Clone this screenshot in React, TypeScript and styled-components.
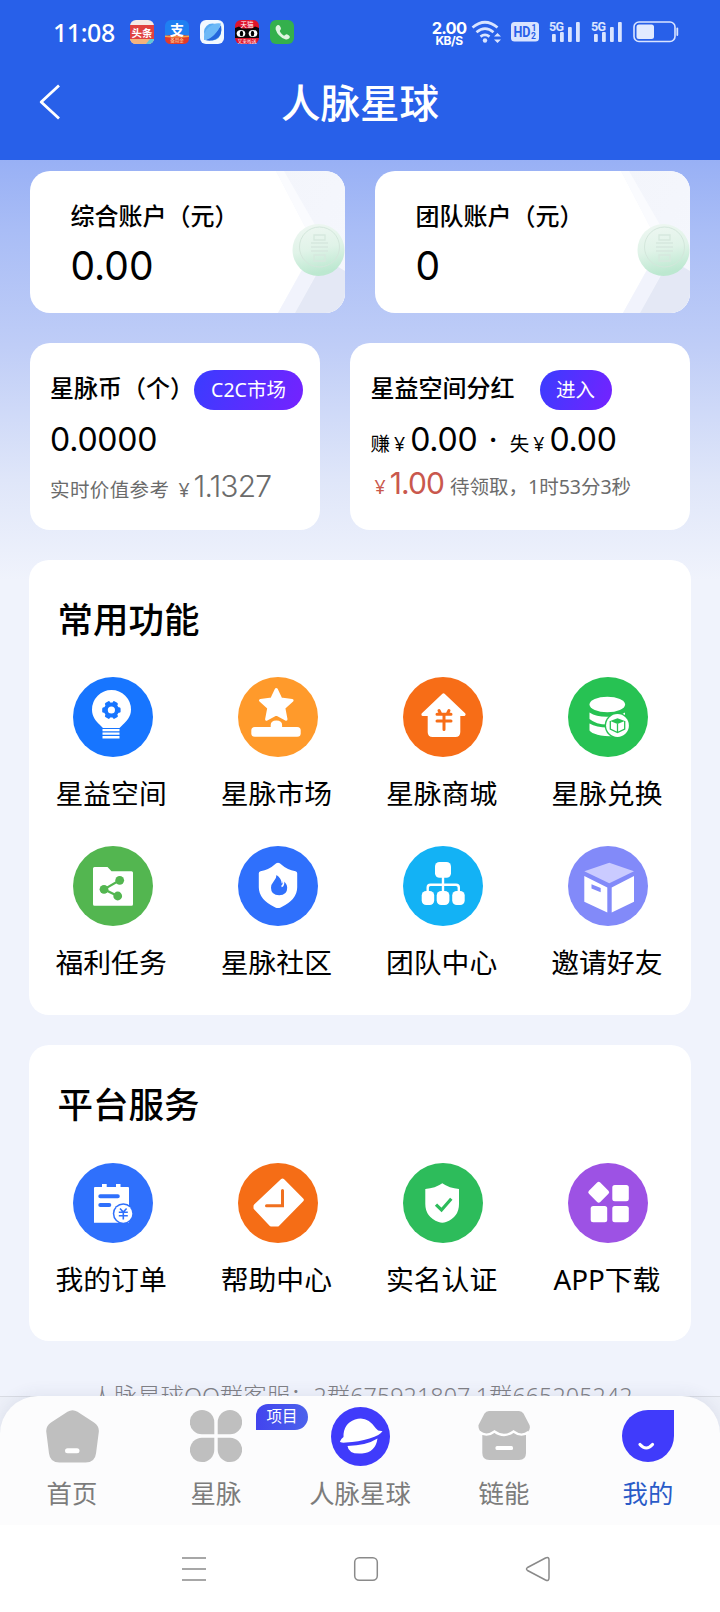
import React from 'react';
import styled, { createGlobalStyle } from 'styled-components';

const sans = `"Noto Sans", "Noto Sans CJK SC", sans-serif`;
const numeric = `Inter, "Noto Sans CJK SC", sans-serif`;

const GlobalStyle = createGlobalStyle`
  * { box-sizing: border-box; }
  body { margin: 0; background: #f0f3fc; font-family: ${sans}; color: #000; }
  svg { display: block; flex: none; }
  h1, h2, p { margin: 0; }
`;

const Page = styled.div`
  width: 720px;
  height: 1612px;
  display: flex;
  flex-direction: column;
  overflow: hidden;
`;

const Header = styled.header`
  height: 160px;
  flex: none;
  background: #2860e9;
  color: #fff;
`;

const StatusBar = styled.div`
  height: 64px;
  padding: 0 41px 0 53px;
  display: flex;
  align-items: center;
  justify-content: space-between;
`;

const StatusGroup = styled.div<{ $gap: number }>`
  display: flex;
  align-items: center;
  gap: ${(p) => p.$gap}px;
`;

const Clock = styled.span`
  font: 500 25px/30px ${sans};
  letter-spacing: -0.45px;
  width: 66px;
`;

const Speed = styled.div`
  width: 36px;
  text-align: center;
  font: 700 16.5px/14px ${numeric};
  letter-spacing: -0.8px;
  padding-top: 2px;
  small {
    display: block;
    font: 700 12px/11px ${numeric};
    letter-spacing: -0.5px;
  }
`;

const TitleBar = styled.div`
  height: 78px;
  display: grid;
  grid-template-columns: 100px 1fr 100px;
  align-items: center;
`;

const BackButton = styled.button`
  border: 0;
  padding: 0 0 2px 38px;
  background: none;
  color: inherit;
`;

const Title = styled.h1`
  text-align: center;
  font: 500 39.5px/54px ${sans};
`;

const Main = styled.main`
  flex: 1;
  min-height: 0;
  overflow: hidden;
  padding: 11px 29px 0;
  background: linear-gradient(#98b0f5 0, #a9bdf6 70px, #bfcdf7 185px, #dfe6f9 320px, #f0f3fc 420px);
`;

const CardRow = styled.div<{ $cols: string }>`
  display: grid;
  grid-template-columns: ${(p) => p.$cols};
  gap: 30px;
  margin: 0 1px 30px;
`;

const Card = styled.section<{ $height: number; $pad: string }>`
  position: relative;
  height: ${(p) => p.$height}px;
  padding: ${(p) => p.$pad};
  border-radius: 20px;
  overflow: hidden;
  background: #fff;
  white-space: nowrap;
`;

const CardArt = styled.svg`
  position: absolute;
  inset: 0;
`;

const CardBody = styled.div`
  position: relative;
`;

const CardHead = styled.div<{ $gap: number }>`
  display: flex;
  align-items: center;
  gap: ${(p) => p.$gap}px;
  height: 40px;
`;

const CardLabel = styled.div`
  font: 500 24px/30px ${sans};
  height: 34px;
`;

const Amount = styled.div`
  font: 400 39px/50px ${numeric};
  margin-top: 6px;
`;

const Chip = styled.button<{ $width: number }>`
  width: ${(p) => p.$width}px;
  height: 40px;
  flex: none;
  border: 0;
  padding: 0;
  border-radius: 20px;
  color: #fff;
  font: 400 19.5px/38px ${sans};
  background: linear-gradient(110deg, #3a3cff, #7522ff);
`;

const Line = styled.div<{ $top: number; $muted?: boolean }>`
  display: flex;
  align-items: baseline;
  height: 40px;
  line-height: 40px;
  margin-top: ${(p) => p.$top}px;
  font-size: 19.5px;
  font-family: ${sans};
  color: ${(p) => (p.$muted ? '#6b6b6b' : '#000')};
`;

const Num = styled.span<{ $size: number; $light?: boolean; $left?: number; $red?: boolean; $track?: number }>`
  font-family: ${numeric};
  font-size: ${(p) => p.$size}px;
  font-weight: ${(p) => (p.$light ? 300 : 400)};
  margin-left: ${(p) => p.$left ?? 0}px;
  letter-spacing: ${(p) => p.$track ?? 0}px;
  ${(p) => p.$red && 'color: #c9584d;'}
`;

const Bit = styled.span<{ $left?: number; $red?: boolean; $track?: number }>`
  margin-left: ${(p) => p.$left ?? 0}px;
  letter-spacing: ${(p) => p.$track ?? 0}px;
  ${(p) => p.$red && 'color: #c9584d;'}
`;

const Panel = styled.section<{ $height: number }>`
  height: ${(p) => p.$height}px;
  padding-top: 35px;
  margin-bottom: 30px;
  border-radius: 20px;
  background: #fff;
`;

const PanelTitle = styled.h2`
  padding-left: 28.5px;
  font: 500 35.5px/48px ${sans};
`;

const Grid = styled.div<{ $top: number }>`
  display: grid;
  grid-template-columns: repeat(4, 1fr);
  row-gap: 26px;
  padding: ${(p) => p.$top}px 0 0 1px;
`;

const Feature = styled.div`
  display: flex;
  flex-direction: column;
  align-items: center;
  height: 143px;
`;

const FeatureLabel = styled.span`
  margin-top: 16px;
  font: 400 27.8px/40px ${sans};
  padding-right: 3px;
  white-space: nowrap;
`;

const Support = styled.p`
  padding: 9px 0 0 3px;
  text-align: center;
  font: 300 23.4px/32px ${sans};
  color: #808085;
  white-space: nowrap;
`;

const TabDock = styled.div`
  position: relative;
  flex: none;
  height: 129px;
  background: linear-gradient(#d9dce3 1px, #edf0f8 1px);
`;

const TabBar = styled.nav`
  height: 129px;
  display: grid;
  grid-template-columns: repeat(5, 1fr);
  border-radius: 38px 38px 0 0;
  background: #fcfcfd;
  box-shadow: 0 -2px 16px rgba(60, 70, 110, 0.09);
`;

const Tab = styled.div<{ $active?: boolean }>`
  position: relative;
  display: flex;
  flex-direction: column;
  align-items: center;
  color: ${(p) => (p.$active ? '#2a5bc8' : '#7c7c7c')};
  font: 400 25.4px/36px ${sans};
  white-space: nowrap;
`;

const TabIcon = styled.div`
  height: 79px;
  padding-top: 1px;
  display: flex;
  align-items: center;
  justify-content: center;
`;

const Badge = styled.span`
  position: absolute;
  left: 112px;
  top: 8px;
  width: 52px;
  height: 26px;
  border-radius: 12px 13px 13px 0;
  background: linear-gradient(90deg, #4244ee, #4c62ec);
  color: #fff;
  font: 400 15.5px/25px ${sans};
  text-align: center;
`;

const SystemNav = styled.div`
  position: relative;
  flex: none;
  height: 87px;
  display: flex;
  align-items: center;
  justify-content: center;
  gap: 146px;
  padding-left: 12px;
  background: #fff;
`;

type Art = { color: string; children: React.ReactNode };
const Disc = ({ color, children }: Art) => (
  <svg width="80" height="80" viewBox="0 0 80 80">
    <circle cx="40" cy="40" r="40" fill={color} />
    {children}
  </svg>
);

const common = [
  {
    label: '星益空间',
    color: '#1775ff',
    art: (
      <g fill="#fff">
        <path d="M19 32.5a19.5 19.5 0 0 1 39 0c0 7.500-4.500 11.500-8 15l-3.500 3.500h-16.500l-3.500-3.500c-3.500-3.500-7.500-7.500-7.500-15z" />
        <path d="M29.500 52h17v2.200h-17zM29.500 55.500h17v2.200h-17zM29.500 59h17v2.500h-17z" />
        <circle cx="38.400" cy="33" r="5.600" fill="none" stroke="#1775ff" strokeWidth="4" />
        <g fill="#1775ff">
          {[0, 60, 120, 180, 240, 300].map((a) => (
            <rect key={a} x="35.600" y="23.800" width="5.600" height="4.500" rx="1.500" transform={`rotate(${a + 30} 38.400 33)`} />
          ))}
        </g>
      </g>
    ),
  },
  {
    label: '星脉市场',
    color: '#ff9a2b',
    art: (
      <g fill="#fff" stroke="#fff" strokeLinejoin="round">
        <path strokeWidth="3" d="M38.300 12.500l4.600 9.600 11.200 1.300-8.300 7.500 2.200 11.400-9.700-5.400-9.700 5.400 2.200-11.400-8.300-7.500 11.200-1.300z" />
        <rect x="13.300" y="50" width="49.400" height="9.800" rx="3.500" stroke="none" />
        <path stroke="none" d="M32.700 51v-3q0-4.500 5.700-4.500t5.700 4.500v3z" />
      </g>
    ),
  },
  {
    label: '星脉商城',
    color: '#f76d17',
    art: (
      <>
        <path d="M40.500 18L61 37.400H20z" fill="#fff" stroke="#fff" strokeWidth="3.200" strokeLinejoin="round" />
        <path d="M24.700 36h32.600v19q0 5-5 5H29.700q-5 0-5-5z" fill="#fff" />
        <path d="M36 33.500l1.500 3M46 33.500l-1.500 3M34 37.300h14M34 44h14M41 38v14.500" fill="none" stroke="#f76d17" strokeWidth="3" strokeLinecap="round" />
      </>
    ),
  },
  {
    label: '星脉兑换',
    color: '#27c253',
    art: (
      <>
        <ellipse cx="39.300" cy="27.500" rx="17.800" ry="7.700" fill="#fff" />
        <path d="M21.500 35.500q7 4.500 18 4.300 11 0 17.500-4.300v9q-6 3-17.500 3T21.500 42zM21.500 46.500q7 4 18 4h8v8.700q-12 0-18-1.500t-8-4.200z" fill="#fff" />
        <circle cx="49.500" cy="48.500" r="12.800" fill="#27c253" />
        <circle cx="49.500" cy="48.500" r="11.400" fill="#fff" />
        <path d="M49.500 41.300l7.300 2.700-7.300 2.900-7.300-2.900z" fill="#27c253" />
        <path d="M42.300 44v8l7.200 3.500 7.200-3.500v-8M49.500 47v8" fill="none" stroke="#27c253" strokeWidth="1.300" />
      </>
    ),
  },
  {
    label: '福利任务',
    color: '#53b650',
    art: (
      <>
        <path d="M21.500 21h13l4 4.300H58.500q1.500 0 1.500 1.500v31.500q0 1.500-1.500 1.500h-37q-1.500 0-1.500-1.500v-35.800q0-1.500 1.500-1.500z" fill="#fff" />
        <path d="M46.700 34.300L31 43.300l13.700 6.700" fill="none" stroke="#53b650" strokeWidth="2.200" />
        <g fill="#53b650">
          <circle cx="46.700" cy="34.300" r="4.400" />
          <circle cx="31" cy="43.300" r="4.400" />
          <circle cx="44.700" cy="50" r="4.400" />
        </g>
      </>
    ),
  },
  {
    label: '星脉社区',
    color: '#2f70fc',
    art: (
      <>
        <path d="M40 16.700q2 0 3 1.500 6 5.500 14.500 7 1.700.300 1.700 2v14q0 12.500-16.500 20.200-2.700 1.300-5.400 0Q20.800 53.700 20.800 41.200v-14q0-1.700 1.700-2 8.500-1.500 14.500-7 1-1.500 3-1.500z" fill="#fff" />
        <path d="M38.500 29q5 3.500 5.200 8.500 1.300-.800 1.300-2.800 4.200 3 4.200 7 0 7.500-8 7.500-8.200 0-8.200-7.500 0-3.200 2.600-6.200 2.900-3 2.900-6.500z" fill="#2f70fc" />
        <path d="M43.500 40.500q2.500-1 2-6" fill="none" stroke="#fff" strokeWidth="1.600" />
      </>
    ),
  },
  {
    label: '团队中心',
    color: '#13b2f5',
    art: (
      <>
        <g fill="#fff">
          <rect x="32" y="16" width="16" height="15.700" rx="4.500" />
          <rect x="18.700" y="45" width="12.500" height="14" rx="4.500" />
          <rect x="33.700" y="45" width="12.700" height="14" rx="4.500" />
          <rect x="49.200" y="45" width="12.500" height="14" rx="4.500" />
        </g>
        <path d="M40 31v15M24.700 46v-4.500q0-2.800 2.800-2.800h25.500q2.800 0 2.800 2.800V46" fill="none" stroke="#fff" strokeWidth="2.400" />
      </>
    ),
  },
  {
    label: '邀请好友',
    color: '#828af9',
    art: (
      <>
        <path d="M41.300 16.700L66 25.300 41.300 37.300 16.300 25.300z" fill="#cacbff" />
        <path d="M16.300 30l23 11.500v25L16.300 55.700zM66 30L43.700 41.500v25L66 55.700z" fill="#fff" />
        <path d="M23.500 38.200l9.200 3.800v4.200l-9.200-3.700z" fill="#828af9" />
      </>
    ),
  },
];

const services = [
  {
    label: '我的订单',
    color: '#2f70fc',
    art: (
      <>
        <path d="M22 24h7v-3h4.700v3h9.300v-3h4.500v3H55q1 0 1 1v34.700H21V25q0-1 1-1z" fill="#fff" />
        <path d="M27.300 33.300h17.500M27.300 42h9" stroke="#2f70fc" strokeWidth="4" strokeLinecap="round" />
        <circle cx="50.300" cy="50.700" r="10.500" fill="#2f70fc" />
        <circle cx="50.300" cy="50.700" r="9" fill="#fff" />
        <path d="M47 45.500l3.300 3.500 3.300-3.500M45.800 49.300h9M45.800 52.700h9M50.300 49v7.500" fill="none" stroke="#2f70fc" strokeWidth="1.600" />
      </>
    ),
  },
  {
    label: '帮助中心',
    color: '#f56d16',
    art: (
      <>
        <path d="M44.500 17.500L63.800 36.800 39.500 61.500h-6.500L17.500 45v-2z" fill="#fff" stroke="#fff" strokeWidth="4" strokeLinejoin="round" />
        <path d="M44.500 27.500v15.300H28.500" fill="none" stroke="#f0701f" strokeWidth="3" strokeLinecap="round" />
      </>
    ),
  },
  {
    label: '实名认证',
    color: '#2dbc5b',
    art: (
      <>
        <path d="M39.300 20.300q7 5 16.700 5.700v15q0 13-13 18-3.700 1.500-7.400 0-13.300-5-13.300-18V26q10-.700 17-5.700z" fill="#fff" />
        <path d="M33 41.700l5.500 5.300 9.800-11.300" fill="none" stroke="#2dbc5b" strokeWidth="3.200" />
      </>
    ),
  },
  {
    label: 'APP下载',
    color: '#9d52e4',
    art: (
      <g fill="#fff">
        <rect x="22.700" y="21.300" width="16" height="16" rx="2.200" transform="rotate(45 30.700 29.300)" />
        <rect x="44.300" y="22" width="16.500" height="16.300" rx="2.500" />
        <rect x="22.700" y="43" width="16.500" height="16.300" rx="2.500" />
        <rect x="44.300" y="43" width="16.500" height="16.300" rx="2.500" />
      </g>
    ),
  },
];

const EnergyArt = ({ id }: { id: string }) => (
  <CardArt width="315" height="142" viewBox="0 0 315 142" aria-hidden>
    <defs>
      <linearGradient id={`${id}-coin`} x1="0" y1="0" x2="0.200" y2="1">
        <stop offset="0" stopColor="#f0f7f3" />
        <stop offset="0.550" stopColor="#e0f3e8" />
        <stop offset="1" stopColor="#bce8d0" />
      </linearGradient>
      <linearGradient id={`${id}-top`} x1="0" y1="0" x2="1" y2="1">
        <stop offset="0" stopColor="#f3f5fb" />
        <stop offset="1" stopColor="#f5f7fd" />
      </linearGradient>
    </defs>
    <path d="M246 0H315V142H248L285 75z" fill={`url(#${id}-top)`} />
    <path d="M246 0H254L292 66 285 75z" fill="#fafbfe" />
    <path d="M248 142H265L294 88 284 78z" fill="#f1f3fc" />
    <path d="M265 142L295 88 315 100V142z" fill="#e4e8f5" />
    <circle cx="288.500" cy="79" r="26" fill={`url(#${id}-coin)`} />
    <circle cx="289.500" cy="76" r="20" fill="none" stroke="#d3e6db" strokeWidth="1" />
    <path d="M284 64h11v5h-11zM281 72h17M281 76h17M281 80h17M284 84h11v6h-11z" fill="none" stroke="#d6e8de" strokeWidth="1.300" />
    <text x="15" y="82" fontFamily="DejaVu Sans" fontWeight="700" fontStyle="italic" fontSize="34" fill="#000" fillOpacity="0.018" textLength="240">
      Green energ
    </text>
  </CardArt>
);

const SoftArt = ({ width }: { width: number }) => (
  <CardArt width={width} height="187" viewBox={`0 0 ${width} 187`} aria-hidden>
    <text x="20" y="108" fontFamily="DejaVu Sans" fontWeight="700" fontStyle="italic" fontSize="45" fill="#000" fillOpacity="0.014" textLength="330">
      Green energ
    </text>
  </CardArt>
);

const Signal = () => (
  <svg width="32" height="24" viewBox="0 0 32 24" fill="#d9e4ff">
    <text x="0" y="10.500" fontFamily="Roboto" fontSize="12.500" fontWeight="700" textLength="15">5G</text>
    <rect x="3" y="14" width="3.800" height="8" rx="1" />
    <rect x="11" y="12" width="3.800" height="10" rx="1" />
    <rect x="19" y="7" width="3.800" height="15" rx="1" />
    <rect x="27" y="2" width="3.800" height="20" rx="1" />
  </svg>
);

const StatusIcons = () => (
  <>
    <svg width="24" height="24" viewBox="0 0 24 24">
      <rect width="24" height="24" rx="6" fill="#f5e9e6" />
      <path d="M0 5h24v14H0z" fill="#e0403f" />
      <path d="M0 19h24q-1 5-6 5H6q-5 0-6-5z" fill="#f3b27c" />
      <path d="M16 24l4-5h4q-1 5-6 5z" fill="#5cc6dc" />
      <text x="12" y="16.500" fontFamily="Noto Sans CJK SC" fontWeight="700" fontSize="10.500" fill="#fff" textAnchor="middle">头条</text>
    </svg>
    <svg width="24" height="24" viewBox="0 0 24 24">
      <rect width="24" height="24" rx="6" fill="#1f7ff2" />
      <path d="M0 16q12-3 24 0v2q0 6-6 6H6q-6 0-6-6z" fill="#e23a2a" />
      <path d="M0 15.500q12 1.500 24 0v1.500q-12 1-24 0z" fill="#f4a54a" />
      <text x="12" y="14.500" fontFamily="Noto Sans CJK SC" fontWeight="700" fontSize="14" fill="#fff" textAnchor="middle">支</text>
      <text x="12" y="22" fontFamily="Noto Sans CJK SC" fontSize="4.500" fill="#ffe2b0" textAnchor="middle">备用金</text>
    </svg>
    <svg width="24" height="24" viewBox="0 0 24 24">
      <rect width="24" height="24" rx="6" fill="#f1f8ff" />
      <circle cx="12.500" cy="12" r="8.500" fill="#56aaf3" />
      <path d="M21 5q2 10-5 14-5 3-11 1Q15 17 21 5z" fill="#2467dc" />
      <path d="M4 20Q3 12 9 7t12-3.500Q19 10 14 15T4 20z" fill="#6cb9f7" />
    </svg>
    <svg width="24" height="24" viewBox="0 0 24 24">
      <rect width="24" height="24" rx="6" fill="#e0142c" />
      <path d="M0 8l4-1.500 3 2h10l3-2L24 8v10H0z" fill="#0c0709" />
      <ellipse cx="6" cy="13.500" rx="4.300" ry="3.500" fill="#fff" />
      <ellipse cx="18" cy="13.500" rx="4.300" ry="3.500" fill="#fff" />
      <ellipse cx="6.500" cy="13.500" rx="1.700" ry="2.800" />
      <ellipse cx="17.500" cy="13.500" rx="1.700" ry="2.800" />
      <text x="12" y="7" fontFamily="Noto Sans CJK SC" fontSize="6.500" fill="#fff" textAnchor="middle">天猫</text>
      <text x="12" y="22.700" fontFamily="Noto Sans CJK SC" fontSize="4.800" fill="#fff" textAnchor="middle">又来啦送</text>
    </svg>
    <svg width="24" height="24" viewBox="0 0 24 24">
      <rect width="24" height="24" rx="6" fill="#34b04c" />
      <path d="M7.200 5.300q1.500-1 2.700.800l.900 1.700q.600 1.200-.500 2.200-.900.900-.100 2.100 1.200 2 3 3.100 1.100.700 2-.200 1-1.100 2.200-.400l1.600 1q1.500 1.100.500 2.500-1.700 2-4.300 1.200Q7.800 16.500 5.600 9.200 5.100 6.700 7.200 5.300z" fill="#dff5e0" />
    </svg>
  </>
);

export default function App() {
  return (
    <>
      <GlobalStyle />
      <Page>
        <Header>
          <StatusBar>
            <StatusGroup $gap={11}>
              <Clock>11:08</Clock>
              <StatusIcons />
            </StatusGroup>
            <StatusGroup $gap={10}>
              <StatusGroup $gap={4}>
                <Speed>
                  2.00<small>KB/S</small>
                </Speed>
                <svg width="30" height="24" viewBox="0 0 30 24" fill="none" stroke="#d9e4ff" strokeWidth="2.700">
                  <path d="M1.500 7.500q12.500-10.500 25 0M5.500 12.200q8.500-7 17 0M9.500 16.600q4.500-3.600 9 0" />
                  <circle cx="14" cy="20.500" r="2.200" fill="#d9e4ff" stroke="none" />
                  <path d="M23 16.500l3.500-3.500 3.500 3.500zM23 19.500l3.500 3.500 3.500-3.500z" fill="#d9e4ff" stroke="none" />
                </svg>
              </StatusGroup>
              <svg width="28" height="20" viewBox="0 0 28 20">
                <rect width="28" height="19.500" rx="3.500" fill="#d9e4ff" />
                <text x="2.500" y="15" fontFamily="Roboto" fontWeight="700" fontSize="14.500" textLength="17" lengthAdjust="spacingAndGlyphs" fill="#2860e9">HD</text>
                <text x="20.500" y="9" fontFamily="Roboto" fontWeight="700" fontSize="8.500" fill="#2860e9">1</text>
                <text x="20" y="17" fontFamily="Roboto" fontWeight="700" fontSize="8.500" fill="#2860e9">2</text>
              </svg>
              <Signal />
              <Signal />
              <svg width="46" height="22" viewBox="0 0 46 22">
                <rect x="1" y="1" width="41" height="19.500" rx="5" fill="none" stroke="#d9e4ff" strokeWidth="1.600" />
                <rect x="3.500" y="3.500" width="17.500" height="14.500" rx="2.500" fill="#e1eaff" />
                <path d="M44.300 7.500v6.500" stroke="#d9e4ff" strokeWidth="1.800" strokeLinecap="round" />
              </svg>
            </StatusGroup>
          </StatusBar>
          <TitleBar>
            <BackButton aria-label="返回">
              <svg width="24" height="36" viewBox="0 0 24 36" fill="none" stroke="#fff" strokeWidth="2.800">
                <path d="M21 1.500L3.200 18 21 34.500" strokeLinejoin="round" />
              </svg>
            </BackButton>
            <Title>人脉星球</Title>
          </TitleBar>
        </Header>

        <Main>
          <CardRow $cols="1fr 1fr">
            <Card $height={142} $pad="30px 0 0 40.5px">
              <EnergyArt id="total" />
              <CardBody>
                <CardLabel>综合账户（元）</CardLabel>
                <Amount>0.00</Amount>
              </CardBody>
            </Card>
            <Card $height={142} $pad="30px 0 0 40.5px">
              <EnergyArt id="team" />
              <CardBody>
                <CardLabel>团队账户（元）</CardLabel>
                <Amount>0</Amount>
              </CardBody>
            </Card>
          </CardRow>

          <CardRow $cols="290px 340px">
            <Card $height={187} $pad="27px 0 0 20px">
              <SoftArt width={290} />
              <CardBody>
                <CardHead $gap={0}>
                  <CardLabel>星脉币（个）</CardLabel>
                  <Chip $width={109}>C2C市场</Chip>
                </CardHead>
                <Line $top={10}>
                  <Num $size={32} $track={-0.2}>0.0000</Num>
                </Line>
                <Line $top={6} $muted>
                  <Bit $track={0.4}>实时价值参考</Bit>
                  <Bit $left={9}>¥</Bit>
                  <Num $size={30} $left={4} $light $track={-0.9}>1.1327</Num>
                </Line>
              </CardBody>
            </Card>
            <Card $height={187} $pad="27px 0 0 20.5px">
              <SoftArt width={340} />
              <CardBody>
                <CardHead $gap={25}>
                  <CardLabel>星益空间分红</CardLabel>
                  <Chip $width={72}>进入</Chip>
                </CardHead>
                <Line $top={10}>
                  <Bit>赚</Bit>
                  <Bit $left={4}>¥</Bit>
                  <Num $size={32} $left={5} $track={-0.2}>0.00</Num>
                  <Num $size={32} $left={11}>·</Num>
                  <Bit $left={12}>失</Bit>
                  <Bit $left={4}>¥</Bit>
                  <Num $size={32} $left={5} $track={-0.2}>0.00</Num>
                </Line>
                <Line $top={3} $muted>
                  <Bit $left={4} $red>¥</Bit>
                  <Num $size={30} $left={4} $red $track={-0.9}>1.00</Num>
                  <Bit $left={6}>待领取，1时53分3秒</Bit>
                </Line>
              </CardBody>
            </Card>
          </CardRow>

          <Panel $height={455}>
            <PanelTitle>常用功能</PanelTitle>
            <Grid $top={34}>
              {common.map((f) => (
                <Feature key={f.label}>
                  <Disc color={f.color}>{f.art}</Disc>
                  <FeatureLabel>{f.label}</FeatureLabel>
                </Feature>
              ))}
            </Grid>
          </Panel>

          <Panel $height={296}>
            <PanelTitle>平台服务</PanelTitle>
            <Grid $top={35}>
              {services.map((f) => (
                <Feature key={f.label}>
                  <Disc color={f.color}>{f.art}</Disc>
                  <FeatureLabel>{f.label}</FeatureLabel>
                </Feature>
              ))}
            </Grid>
          </Panel>

          <Support>人脉星球QQ群客服：2群675921807,1群665205242</Support>
        </Main>

        <TabDock>
          <TabBar>
            <Tab>
              <TabIcon>
                <svg width="53" height="53" viewBox="0 0 53 53">
                  <path d="M21.500 1.800q5-3 10 0L48 12.500q5.500 3.700 4.800 9.500L50 43.500q-1 9-10.500 9h-26q-9.500 0-10.500-9L.300 22q-.7-5.800 4.700-9.500z" fill="#bfbfbf" />
                  <rect x="19" y="38.300" width="14.500" height="5" rx="2.500" fill="#fff" />
                </svg>
              </TabIcon>
              首页
            </Tab>
            <Tab>
              <TabIcon>
                <svg width="52" height="52" viewBox="0 0 52 52" fill="#bfbfbf">
                  <path d="M12 0a12.300 12.300 0 0 1 12.300 12.300V24.300H12A12.150 12.150 0 0 1 12 0z" />
                  <path d="M40 0a12.300 12.300 0 0 0-12.300 12.300V24.300H40A12.150 12.150 0 0 0 40 0z" />
                  <path d="M12 52a12.300 12.300 0 0 0 12.300-12.300V27.700H12A12.150 12.150 0 0 0 12 52z" />
                  <path d="M40 52a12.300 12.300 0 0 1-12.300-12.300V27.700H40A12.150 12.150 0 0 1 40 52z" />
                </svg>
              </TabIcon>
              星脉
              <Badge>项目</Badge>
            </Tab>
            <Tab>
              <TabIcon>
                <svg width="59" height="59" viewBox="0 0 59 59">
                  <circle cx="29.500" cy="29.500" r="29.500" fill="#403bfb" />
                  <path d="M12.500 30Q12 17 24 12.500t21 9q2 3 6.500 2.500-2 4-13 7.500T15 35.500q-6 .5-6-1 1-3 3.500-4.500z" fill="#fff" />
                  <path d="M16.500 39q19-.5 30-7.500-2 14-15.500 15T16.500 39z" fill="#fff" />
                </svg>
              </TabIcon>
              人脉星球
            </Tab>
            <Tab>
              <TabIcon>
                <svg width="52" height="50" viewBox="0 0 52 50">
                  <path d="M4.300 22h43.700v20q0 7-7 7H11.300q-7 0-7-7z" fill="#bfbfbf" />
                  <path d="M11 0h30q3 0 4.500 2.500l6 11.500q1.500 5-2.500 8-6 4-13-.5-9.500 6-19 0-7 4.500-13 .5-4-3-3.500-8L6.500 2.500Q8 0 11 0z" fill="#bfbfbf" />
                  <path d="M1.500 21q7 5.500 15-.5 9.500 7 19 0 8 6 15 .5" fill="none" stroke="#fff" strokeWidth="2.300" />
                  <rect x="17.500" y="35" width="17.500" height="4" rx="1.500" fill="#fff" />
                </svg>
              </TabIcon>
              链能
            </Tab>
            <Tab $active>
              <TabIcon>
                <svg width="52" height="52" viewBox="0 0 52 52">
                  <path d="M26 0H52V26A26 26 0 1 1 26 0z" fill="#403bfb" />
                  <path d="M18 34.500q6.200 7 12.500 0" fill="none" stroke="#fff" strokeWidth="3.200" strokeLinecap="round" />
                </svg>
              </TabIcon>
              我的
            </Tab>
          </TabBar>
        </TabDock>

        <SystemNav>
          <svg width="26" height="26" viewBox="0 0 26 26" stroke="#8a8a8a" strokeWidth="1.600">
            <path d="M1 2h24M1 13h24M1 24h24" />
          </svg>
          <svg width="26" height="26" viewBox="0 0 26 26" fill="none" stroke="#8a8a8a" strokeWidth="1.500">
            <rect x="1.700" y="1.700" width="22.600" height="22.600" rx="4.500" />
          </svg>
          <svg width="26" height="26" viewBox="0 0 26 26" fill="none" stroke="#8a8a8a" strokeWidth="1.500" strokeLinejoin="round">
            <path d="M2.500 11.500L20.500 2q3.500-1.500 3.500 2v18q0 3.500-3.500 2L2.500 14.500q-2-1.500 0-3z" />
          </svg>
        </SystemNav>
      </Page>
    </>
  );
}
